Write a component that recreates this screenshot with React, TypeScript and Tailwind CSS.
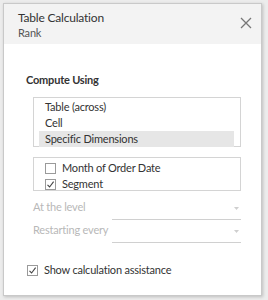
import React from 'react'

const font = { fontFamily: 'Lato, "Open Sans", sans-serif' }

const Check = ({ on }: { on: boolean }) => (
  <span className='w-[11px] h-[11px] border border-[#9a9a9a] bg-white flex items-center justify-center shrink-0'>
    {on && (
      <svg width='9' height='9' viewBox='0 0 9 9'>
        <path d='M1.5 4.8 L3.6 7 L7.6 1.6' fill='none' stroke='#444' strokeWidth='1.1' />
      </svg>
    )}
  </span>
)

const Drop = ({ label }: { label: string }) => (
  <div className='flex items-end h-[23px]'>
    <span className='w-[79px] whitespace-nowrap text-[11px] tracking-[-0.2px] text-[#b8b8b8] pb-[5px]'>{label}</span>
    <div className='flex-1 h-[22px] border-b border-[#d0d0d0] flex justify-end items-center pr-[2px]'>
      <svg width='5' height='3' viewBox='0 0 5 3'>
        <path d='M0 0 L5 0 L2.5 3 Z' fill='#cfcfcf' />
      </svg>
    </div>
  </div>
)

export default function App() {
  return (
    <div className='w-[268px] h-[300px] bg-[#ececec] pt-[3px] pl-[3px]' style={font}>
      <div className='w-[259px] h-[293px] bg-white border border-[#c9c9c9] shadow-[1px_1px_3px_rgba(0,0,0,0.2)] flex flex-col'>
        <div className='h-[40px] bg-[#f3f3f3] pl-[14px] pt-[6px] flex justify-between'>
          <div>
            <div className='text-[12px] tracking-[-0.2px] leading-[16px] text-[#333]'>Table Calculation</div>
            <div className='text-[11px] tracking-[-0.2px] leading-[14px] text-[#555]'>Rank</div>
          </div>
          <svg width='12' height='12' viewBox='0 0 12 12' className='mt-[7px] mr-[9px]'>
            <path d='M1 1 L11 11 M11 1 L1 11' stroke='#777' strokeWidth='1.3' />
          </svg>
        </div>
        <div className='pl-[22px] pr-[20px] pt-[29px] text-[11px] tracking-[-0.2px]'>
          <div className='font-bold text-[#333] leading-[14px]'>Compute Using</div>
          <div className='ml-[7px] mt-[10px] h-[50px] border border-[#d4d4d4] pl-[5px] pr-[6px] text-[#333]'>
            <div className='h-[16px] leading-[16px] pl-[6px] mt-[1px]'>Table (across)</div>
            <div className='h-[16px] leading-[16px] pl-[6px]'>Cell</div>
            <div className='h-[16px] leading-[16px] pl-[6px] bg-[#e6e6e6]'>Specific Dimensions</div>
          </div>
          <div className='ml-[7px] mt-[10px] h-[34px] border border-[#d4d4d4] pl-[11px] pt-[4px] text-[#333] flex flex-col gap-[4px]'>
            <div className='flex items-center gap-[6px] h-[12px]'>
              <Check on={false} />
              <span>Month of Order Date</span>
            </div>
            <div className='flex items-center gap-[6px] h-[12px]'>
              <Check on={true} />
              <span>Segment</span>
            </div>
          </div>
          <div className='ml-[7px] mt-[6px]'>
            <Drop label='At the level' />
            <Drop label='Restarting every' />
          </div>
          <div className='ml-[1px] mt-[19px] flex items-center gap-[6px] text-[#333]'>
            <Check on={true} />
            <span>Show calculation assistance</span>
          </div>
        </div>
      </div>
    </div>
  )
}
